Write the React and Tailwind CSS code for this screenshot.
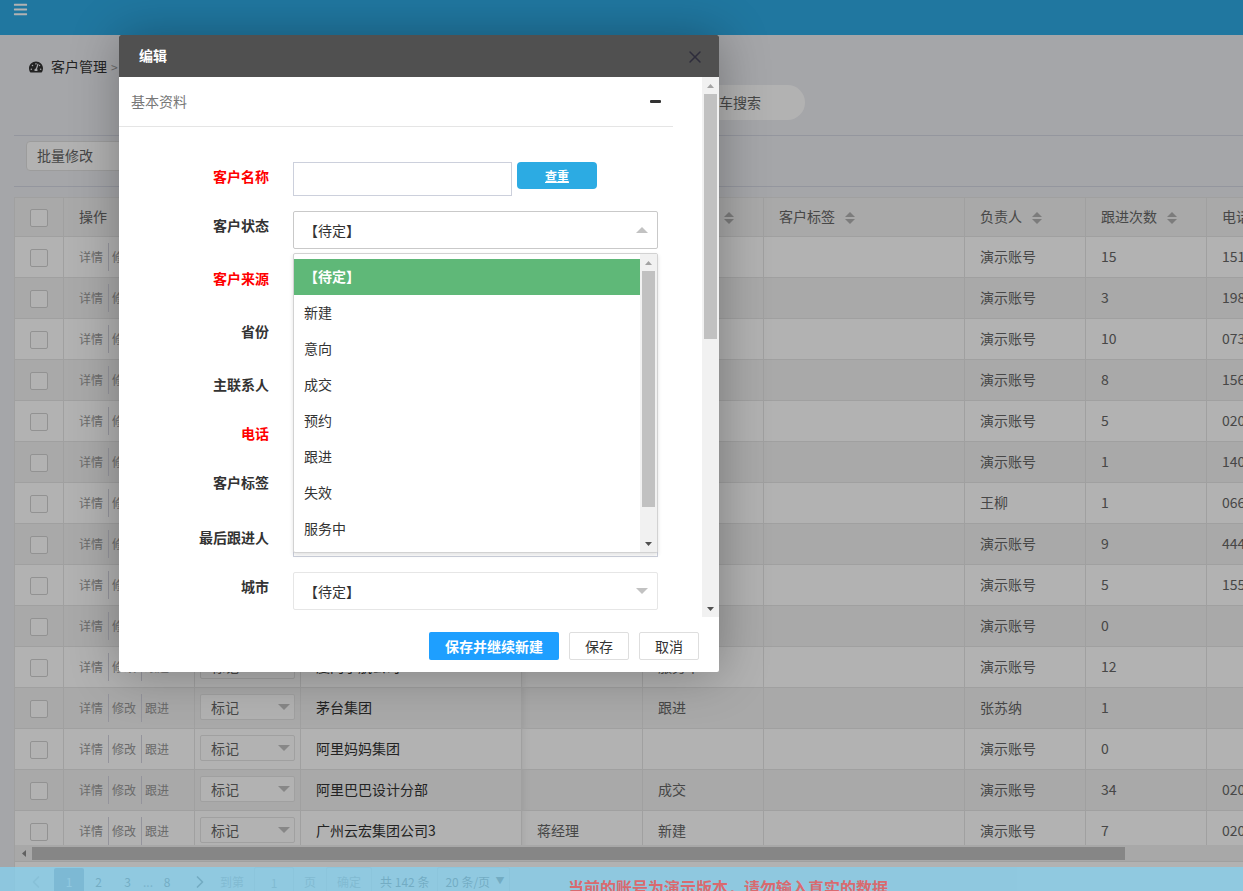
import { FaBars, FaTachometerAlt } from 'react-icons/fa';
import { X, ChevronLeft, ChevronRight } from 'lucide-react';

const COLUMNS = [
  { label: '客户名称', width: 221 },
  { label: '主联系人', width: 121 },
  { label: '客户状态', width: 121, sortable: true },
  { label: '客户标签', width: 201, sortable: true },
  { label: '负责人', width: 121, sortable: true },
  { label: '跟进次数', width: 121, sortable: true },
  { label: '电话', width: 121 },
];

const ROWS = [
  { owner: '演示账号', count: 15, phone: '15112345678' },
  { owner: '演示账号', count: 3, phone: '19812345678' },
  { owner: '演示账号', count: 10, phone: '07312345678' },
  { owner: '演示账号', count: 8, phone: '15612345678' },
  { owner: '演示账号', count: 5, phone: '02012345678' },
  { owner: '演示账号', count: 1, phone: '14012345678' },
  { owner: '王柳', count: 1, phone: '06612345678' },
  { owner: '演示账号', count: 9, phone: '44412345678' },
  { owner: '演示账号', count: 5, phone: '15512345678' },
  { owner: '演示账号', count: 0 },
  { name: '厦门宇航公司', status: '服务中', owner: '演示账号', count: 12 },
  { name: '茅台集团', status: '跟进', owner: '张苏纳', count: 1 },
  { name: '阿里妈妈集团', owner: '演示账号', count: 0 },
  { name: '阿里巴巴设计分部', status: '成交', owner: '演示账号', count: 34, phone: '02012345678' },
  { name: '广州云宏集团公司3', contact: '蒋经理', status: '新建', owner: '演示账号', count: 7, phone: '02012345678' },
];

const STATUS_OPTIONS = ['【待定】', '新建', '意向', '成交', '预约', '跟进', '失效', '服务中'];

const BORDER = 'border-r border-b border-[#e6e6e6] text-left font-normal whitespace-nowrap overflow-hidden';
const CELL = `${BORDER} px-[15px] pb-0.5`;
const CHECK_CELL = `${BORDER} px-[15px] pt-0.5`;
const CHECKBOX = 'block size-[18px] appearance-none rounded-xs border border-[#d2d2d2] bg-white';

function Triangle({ className, up = false }) {
  return (
    <svg viewBox="0 0 12 6" preserveAspectRatio="none" className={className} fill="currentColor" aria-hidden="true">
      <path d={up ? 'M6 0L12 6H0Z' : 'M0 0H12L6 6Z'} />
    </svg>
  );
}

function SortIcon() {
  return (
    <span className="ml-2.5 inline-flex flex-col gap-[2px] align-middle text-[#b2b2b2]">
      <Triangle up className="h-[5px] w-2.5" />
      <Triangle className="h-[5px] w-2.5" />
    </span>
  );
}

function SelectBox({ id, label, value, open = false, className, arrow }) {
  return (
    <div className="relative">
      <select
        id={id}
        aria-label={label}
        defaultValue={value}
        className={`block w-full appearance-none rounded-xs border bg-white pl-2.5 ${className}`}
      >
        <option>{value}</option>
      </select>
      <Triangle up={open} className={`pointer-events-none absolute top-1/2 h-1.5 w-3 -translate-y-1/2 text-[#c2c2c2] ${arrow}`} />
    </div>
  );
}

function Scrollbar({ children }) {
  return (
    <div className="flex w-[17px] shrink-0 flex-col items-center bg-[#f1f1f1]" aria-hidden="true">
      <span className="flex h-[17px] items-center">
        <Triangle up className="h-1 w-[7px] text-[#a3a3a3]" />
      </span>
      {children}
      <span className="mt-auto flex h-[17px] items-center">
        <Triangle className="h-1 w-[7px] text-[#505050]" />
      </span>
    </div>
  );
}

function CustomerTable() {
  return (
    <div className="border-t border-l border-[#e6e6e6] bg-white">
      <div className="h-[647px] overflow-hidden">
        <table className="w-[1313px] table-fixed border-separate border-spacing-0 text-sm text-[#666]">
          <colgroup>
            <col className="w-[49px]" />
            <col className="w-[131px]" />
            <col className="w-[106px]" />
            {COLUMNS.map((c) => (
              <col key={c.label} style={{ width: c.width }} />
            ))}
          </colgroup>
          <thead>
            <tr className="h-[39px] bg-[#f2f2f2]">
              <th className={CHECK_CELL}>
                <input type="checkbox" aria-label="全选" className={CHECKBOX} />
              </th>
              <th className={CELL}>操作</th>
              <th className={CELL}>标记</th>
              {COLUMNS.map((c) => (
                <th key={c.label} className={CELL}>
                  {c.label}
                  {c.sortable && <SortIcon />}
                </th>
              ))}
            </tr>
          </thead>
          <tbody>
            {ROWS.map((row, i) => (
              <tr key={i} className="h-[41px] even:bg-[#f2f2f2]">
                <td className={CHECK_CELL}>
                  <input type="checkbox" aria-label="选择" className={CHECKBOX} />
                </td>
                <td className={`${BORDER} px-[15px]`}>
                  <div className="flex text-xs leading-7 text-[#999]">
                    <a href="#detail" className="border-r border-[#d5d5e0] pr-[5px]">详情</a>
                    <a href="#edit" className="border-r border-[#d5d5e0] pr-[5px] pl-[3px]">修改</a>
                    <a href="#follow" className="pl-[3px]">跟进</a>
                  </div>
                </td>
                <td className={`${BORDER} px-[5px] pb-0.5`}>
                  <SelectBox label="标记" value="标记" className="h-[26px] border-[#e6e6e6] leading-6" arrow="right-[5px]" />
                </td>
                <td className={`${CELL} text-[#333]`}>{row.name}</td>
                <td className={`${CELL} shadow-[inset_8px_0_8px_-8px_rgba(0,0,0,0.1)]`}>{row.contact}</td>
                <td className={CELL}>{row.status}</td>
                <td className={CELL}></td>
                <td className={CELL}>{row.owner}</td>
                <td className={CELL}>{row.count}</td>
                <td className={CELL}>{row.phone}</td>
              </tr>
            ))}
          </tbody>
        </table>
      </div>
      <div className="flex h-[17px] items-center border-b border-[#e6e6e6] bg-[#f1f1f1]" aria-hidden="true">
        <span className="flex w-[17px] justify-center">
          <svg viewBox="0 0 4 7" className="h-[7px] w-1" fill="#8b8b8b"><path d="M4 0V7L0 3.500Z" /></svg>
        </span>
        <span className="h-[13px] w-[89%] bg-[#c1c1c1]" />
      </div>
      <Pager />
    </div>
  );
}

function Pager() {
  return (
    <nav className="flex h-10 items-center pl-[7px] text-xs text-[#333]" aria-label="分页">
      <button type="button" aria-label="上一页" className="flex w-8 justify-center pr-1 text-[#c2c2c2]"><ChevronLeft size={20} /></button>
      <button type="button" className="h-7 w-[30px] rounded-xs bg-[#7f8fae] text-white">1</button>
      <button type="button" className="w-[29px]">2</button>
      <button type="button" className="w-[29px]">3</button>
      <span className="w-3 text-center text-[#666]">...</span>
      <button type="button" className="w-[26px]">8</button>
      <button type="button" aria-label="下一页" className="flex w-10 justify-center"><ChevronRight size={20} /></button>
      <label className="flex items-center text-[#999]">
        到第
        <input type="text" defaultValue="1" className="mx-2.5 h-[30px] w-10 rounded-xs border border-[#e2e2e2] text-center" />
        页
      </label>
      <button type="button" className="ml-2.5 h-[30px] w-[46px] rounded-xs border border-[#e2e2e2] text-[#999]">确定</button>
      <span className="mx-2">共 142 条</span>
      <div className="relative">
        <select aria-label="每页条数" className="h-[30px] w-[73px] appearance-none rounded-xs border border-[#e2e2e2] bg-white pl-[7px]">
          <option>20 条/页</option>
        </select>
        <span className="pointer-events-none absolute top-2 right-1.5 text-[9px]">▼</span>
      </div>
    </nav>
  );
}

function Field({ id, label, required = false, children }) {
  return (
    <div className="flex items-start gap-6">
      <label htmlFor={id} className={`w-[150px] text-right leading-7 font-bold ${required ? 'text-[#ff0000]' : 'text-[#333]'}`}>
        {label}
      </label>
      <div className="relative w-[365px]">{children}</div>
    </div>
  );
}

function StatusMenu() {
  return (
    <div className="absolute top-[42px] left-0 z-10 flex h-[300px] w-full overflow-hidden rounded-xs border border-[#d2d2d2] bg-white shadow-[0_2px_4px_rgba(0,0,0,0.12)]">
      <ul role="listbox" aria-label="客户状态" className="flex-1 overflow-hidden py-[5px]">
        {STATUS_OPTIONS.map((option, i) => (
          <li
            key={option}
            role="option"
            aria-selected={i === 0}
            className={`h-9 px-2.5 leading-[34px] ${i === 0 ? 'bg-[#5fb878] font-bold text-white' : 'text-[#333]'}`}
          >
            {option}
          </li>
        ))}
      </ul>
      <Scrollbar>
        <span className="h-[236px] w-[13px] bg-[#c1c1c1]" />
      </Scrollbar>
    </div>
  );
}

function EditDialog() {
  const input = 'block h-[34px] w-full border border-[#ccd0dc] bg-white px-2';
  return (
    <section
      role="dialog"
      aria-label="编辑"
      className="absolute top-[35px] left-[119px] z-30 w-[600px] rounded-xs bg-white text-sm shadow-[1px_1px_50px_rgba(0,0,0,0.3)]"
    >
      <header className="flex h-[42px] items-center justify-between rounded-t-xs bg-[#505050] pr-3.5 pl-5">
        <h2 className="pb-0.5 font-bold text-white">编辑</h2>
        <button type="button" aria-label="关闭" className="pt-0.5 text-[#2e2d3c]"><X size={20} strokeWidth={1.75} /></button>
      </header>

      <div className="flex h-[540px] overflow-hidden">
        <div className="flex-1">
          <div className="mr-[29px] flex h-[50px] items-center justify-between border-b border-[#e5e5e5] px-3">
            <h3 className="pb-0.5 text-[#777]">基本资料</h3>
            <button type="button" aria-label="收起" className="h-[3px] w-[11px] rounded-[1px] bg-[#333]" />
          </div>
          <form className="flex flex-col gap-[15px] pt-[35px]">
            <Field id="name" label="客户名称" required>
              <div className="flex items-start gap-[5px]">
                <input id="name" type="text" className="h-[34px] w-[219px] border border-[#ccd0dc] px-2" />
                <button type="button" className="h-[27px] w-20 rounded bg-[#2cabe3] text-xs font-bold text-white underline">查重</button>
              </div>
            </Field>
            <Field id="status" label="客户状态">
              <SelectBox id="status" value="【待定】" open className="h-[38px] border-[#c9c9c9] text-[#333]" arrow="right-2.5" />
              <StatusMenu />
            </Field>
            <Field id="source" label="客户来源" required>
              <SelectBox id="source" value="【待定】" className="h-[38px] border-[#e6e6e6]" arrow="right-2.5" />
            </Field>
            <Field id="province" label="省份">
              <SelectBox id="province" value="【待定】" className="h-[38px] border-[#e6e6e6]" arrow="right-2.5" />
            </Field>
            <Field id="contact" label="主联系人">
              <input id="contact" type="text" className={input} />
            </Field>
            <Field id="phone" label="电话" required>
              <input id="phone" type="text" className={input} />
            </Field>
            <Field id="tags" label="客户标签">
              <input id="tags" type="text" className="block h-10 w-full border border-[#ccd0dc] px-2" />
            </Field>
            <Field id="follower" label="最后跟进人">
              <input id="follower" type="text" className={input} />
            </Field>
            <Field id="city" label="城市">
              <SelectBox id="city" value="【待定】" className="h-[38px] border-[#e6e6e6] text-[#333]" arrow="right-2.5" />
            </Field>
          </form>
        </div>
        <Scrollbar>
          <span className="h-[245px] w-[13px] bg-[#c1c1c1]" />
        </Scrollbar>
      </div>

      <footer className="flex h-[55px] items-start justify-end gap-2.5 pt-[15px] pr-5">
        <button type="button" className="h-7 rounded-xs bg-[#1e9fff] px-4 font-bold text-white">保存并继续新建</button>
        <button type="button" className="h-7 w-[60px] rounded-xs border border-[#dedede] text-[#333]">保存</button>
        <button type="button" className="h-7 w-[60px] rounded-xs border border-[#dedede] text-[#333]">取消</button>
      </footer>
    </section>
  );
}

export default function App() {
  return (
    <div className="relative h-screen overflow-hidden bg-[#edeef3] font-['Noto_Sans_CJK_SC',sans-serif] text-sm">
      <header className="flex h-[35px] items-start bg-[#2fabe6] px-[13px] pt-0.5">
        <button type="button" aria-label="菜单" className="text-white"><FaBars size={15} /></button>
      </header>

      <main className="pl-3.5">
        <div className="flex h-[101px] items-start border-b border-[#d5d7e3]">
          <nav className="flex h-16 flex-1 items-center gap-2 pl-[15px] text-[#333]" aria-label="位置">
            <FaTachometerAlt size={14} />
            <a href="#customers" className="pb-0.5">客户管理</a>
            <span className="-ml-1 text-xs text-[#999]">&gt;</span>
          </nav>
          <input
            type="search"
            aria-label="搜索"
            placeholder="输入关键字回车搜索"
            className="mt-[50px] mr-[438px] h-[35px] w-[184px] rounded-full bg-white pb-0.5 pl-3.5 placeholder:text-[#666]"
          />
        </div>
        <div className="flex h-[51px] items-start border-b border-[#d5d7e3] pt-[5px] pl-3">
          <button type="button" className="h-[30px] w-28 rounded border border-[#e0e0e0] bg-white px-2.5 pb-0.5 text-left text-[#666]">批量修改</button>
        </div>
        <div className="pt-2.5">
          <CustomerTable />
        </div>
      </main>

      <div className="absolute inset-0 z-20 bg-black/30" />
      <EditDialog />

      <div className="absolute inset-x-0 bottom-0 z-40 h-6 overflow-hidden bg-[#87ceeb] pt-2 pl-[213px] text-center text-base font-bold text-[#e3595f] opacity-80">
        当前的账号为演示版本，请勿输入真实的数据
      </div>
    </div>
  );
}
